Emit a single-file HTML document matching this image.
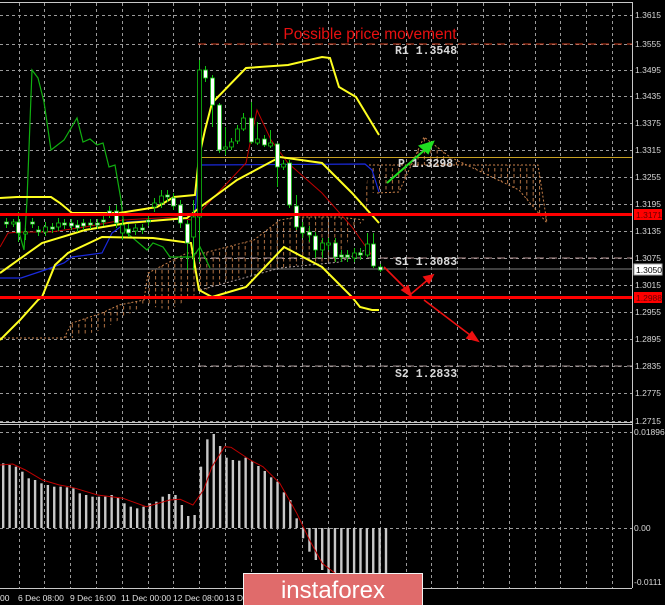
<!DOCTYPE html>
<html><head><meta charset="utf-8"><style>
html,body{margin:0;padding:0;background:#000;width:665px;height:605px;overflow:hidden}
svg{display:block}
text{font-family:"Liberation Sans",sans-serif}
text.mono{font-family:"Liberation Mono",monospace}
</style></head><body>
<svg id="s" width="665" height="605" viewBox="0 0 665 605" xmlns="http://www.w3.org/2000/svg">
<defs>
<pattern id="hatch" width="6.4" height="6" patternUnits="userSpaceOnUse">
<line x1="2" y1="0" x2="2" y2="3.5" stroke="#c8804a" stroke-width="1"/>
</pattern>
</defs>
<rect width="665" height="605" fill="#000"/>
<g id="grid" stroke="#9a9a9a" stroke-width="1" stroke-dasharray="3,3"></g>

<polygon points="0,338 64,338 72,323 102,313 119,305 144,300 148,273 187,253 204,253 254,240 280,220 297,217 339,217 365,220 365,197 369,165 538,165 547,223 519,190 450,157 424,137 399,192 377,193 369,193 365,220 352,230 340,262 300,265 280,268 255,272 200,292 170,310 144,305 102,330 72,338" fill="url(#hatch)" opacity="0.9"/>
<polyline points="0,338 64,338 72,323 102,313 119,305 144,300 148,273 187,253 204,253 254,240 280,220 297,217 339,217 365,220" fill="none" stroke="#c8804a" stroke-dasharray="2,2"/>
<polyline points="369,165 538,165 547,223" fill="none" stroke="#c8804a" stroke-dasharray="2,2"/>
<polyline points="377,193 399,192 424,137 450,157 519,190 547,223" fill="none" stroke="#c8804a" stroke-dasharray="2,2"/>
<polyline points="200,290 280,268 340,262 365,250" fill="none" stroke="#b0a0a0" stroke-dasharray="2,2"/>

<line x1="198" y1="44" x2="632" y2="44" stroke="#d04020" stroke-width="1" stroke-dasharray="8,5"/>
<line x1="198" y1="157.5" x2="632" y2="157.5" stroke="#c8a020" stroke-width="1"/>
<line x1="198" y1="258" x2="632" y2="258" stroke="#b09090" stroke-width="1" stroke-dasharray="8,5"/>
<line x1="198" y1="366" x2="632" y2="366" stroke="#a09090" stroke-width="1" stroke-dasharray="8,5"/>
<line x1="0" y1="269" x2="632" y2="269" stroke="#808080" stroke-width="1"/>

<polyline points="0,278 21,278 45,270 64,263 72,257 102,253 112,233 127,222 187,218 195,213 199,165 365,164 372,170 379,192" fill="none" stroke="#1a2adf" stroke-width="1.2"/>
<polyline points="0,247 8,233 20,232 51,232 85,227 123,220 178,217 191,220 199,213 246,163 257,110 271,140 288,163 322,193 352,227 373,257" fill="none" stroke="#c00000" stroke-width="1"/>
<polyline points="17,225 24,250 27,200 32,70 38,78 44,102 51,150 64,140 77,118 83,142 90,139 97,145 103,143 109,167 115,165 121,200 124,227 127,233 147,250 153,243 163,247 170,257 193,257 200,247 210,268" fill="none" stroke="#10b010" stroke-width="1.2"/>

<g fill="none" stroke="#ffff20" stroke-width="2">
<polyline points="0,198 17,197 51,197 60,203 72,213 119,213 157,207 174,197 195,195 199,157 205,130 212,103 246,68 288,65 322,57 330,58 339,87 356,97 379,135"/>
<polyline points="0,273 42,243 85,230 127,223 187,218 199,208 237,180 280,157 322,163 352,193 379,223"/>
<polyline points="0,340 20,320 38,300 42,297 55,265 68,253 102,237 153,238 191,243 199,290 212,297 246,287 284,247 322,267 352,297 360,307 372,310 379,310"/>
</g>

<g id="candles"></g>

<line x1="0" y1="214.5" x2="632" y2="214.5" stroke="#ff0000" stroke-width="3"/>
<line x1="0" y1="297.5" x2="632" y2="297.5" stroke="#ff0000" stroke-width="3"/>

<g stroke="#20e020" stroke-width="2" fill="#20e020">
<line x1="387" y1="183" x2="428" y2="147"/>
<polygon points="433,142 420,146 428,153"/>
</g>
<g stroke="#ee1010" stroke-width="1.6" fill="#ee1010">
<polyline points="384,267 411,294 430,278" fill="none"/>
<polygon points="433,275 424,277 429,283"/>
<polygon points="411,296 402,290 408,286"/>
<line x1="424" y1="300" x2="474" y2="338"/>
<polygon points="478,341 467,338 472,332"/>
</g>

<text x="370" y="39" fill="#e81010" font-size="15.5" text-anchor="middle">Possible price movement</text>
<g fill="#d8d8d8" font-size="11.5" font-weight="bold">
<text class="mono" x="395" y="54">R1 1.3548</text>
<text class="mono" x="398" y="167">P 1.3298</text>
<text class="mono" x="395" y="265">S1 1.3083</text>
<text class="mono" x="395" y="377">S2 1.2833</text>
</g>

<g id="hist"></g>
<polyline id="sig" fill="none" stroke="#c00000" stroke-width="1"/>

<g stroke="#c8c8c8" stroke-width="1" fill="none">
<line x1="0" y1="2.5" x2="632" y2="2.5"/>
<line x1="632.5" y1="2" x2="632.5" y2="588"/>
<line x1="0" y1="422.5" x2="632" y2="422.5"/>
<line x1="0" y1="424.5" x2="632" y2="424.5"/>
<line x1="0" y1="588.5" x2="632" y2="588.5"/>
</g>

<g fill="#d8d8d8" font-size="8.5">
<text x="635" y="18">1.3615</text>
<text x="635" y="47">1.3555</text>
<text x="635" y="73">1.3495</text>
<text x="635" y="99">1.3435</text>
<text x="635" y="126">1.3375</text>
<text x="635" y="153">1.3315</text>
<text x="635" y="180">1.3255</text>
<text x="635" y="207">1.3195</text>
<text x="635" y="234">1.3135</text>
<text x="635" y="261">1.3075</text>
<text x="635" y="288">1.3015</text>
<text x="635" y="315">1.2955</text>
<text x="635" y="342">1.2895</text>
<text x="635" y="369">1.2835</text>
<text x="635" y="396">1.2775</text>
<text x="635" y="424">1.2715</text>
<text x="634" y="435">0.01896</text>
<text x="634" y="531">0.00</text>
<text x="634" y="585">-0.0111</text>
</g>
<rect x="634" y="209" width="28" height="11" fill="#ff0000"/>
<text x="636" y="218" fill="#600" font-size="8.5">1.3171</text>
<rect x="634" y="292" width="28" height="11" fill="#ff0000"/>
<text x="636" y="301" fill="#600" font-size="8.5">1.2988</text>
<rect x="634" y="264" width="28" height="11" fill="#fff" stroke="#aaa"/>
<text x="636" y="273" fill="#000" font-size="8.5">1.3050</text>

<g fill="#e0e0e0" font-size="8.5">
<text x="0" y="601">00</text>
<text x="18" y="601">6 Dec 08:00</text>
<text x="70" y="601">9 Dec 16:00</text>
<text x="121" y="601">11 Dec 00:00</text>
<text x="173" y="601">12 Dec 08:00</text>
<text x="225" y="601">13 De</text>
</g>

<rect x="243.5" y="573.5" width="179" height="32" fill="#e06b6b" stroke="#f4f4f4" stroke-width="1"/>
<text x="333" y="598" fill="#ffffff" font-size="24" text-anchor="middle">instaforex</text>
</svg>
<script>
(function(){
var NS="http://www.w3.org/2000/svg";
function el(p,t,a){var e=document.createElementNS(NS,t);for(var k in a)e.setAttribute(k,a[k]);p.appendChild(e);return e;}
var g=document.getElementById("grid");
for(var i=0;i<24;i++){var x=Math.round(18.6+25.8*i)+0.5;el(g,"line",{x1:x,y1:3,x2:x,y2:422});el(g,"line",{x1:x,y1:425,x2:x,y2:588});}
var ys=[15,44,70,96,123,150,177,204,231,258,285,312,339,366,393,421];
ys.forEach(function(y){el(g,"line",{x1:0,y1:y+0.5,x2:632,y2:y+0.5});});
[432,528].forEach(function(y){el(g,"line",{x1:0,y1:y+0.5,x2:632,y2:y+0.5});});
var C=[
[6,222,224,218,228,1],[13,222,224,219,227,0],[18,222,233,212,242,1],[25,232,234,228,240,0],[32,222,224,218,228,1],
[38,230,232,226,236,1],[45,227,232,222,236,0],[52,227,229,223,233,1],[58,223,227,218,231,0],[64,223,225,219,229,1],
[71,223,226,219,230,1],[77,225,228,220,232,1],[83,223,226,219,230,1],[90,223,225,219,229,1],[97,223,225,219,229,1],
[103,220,222,215,226,1],[109,211,214,206,218,1],[116,211,223,205,228,1],[122,225,233,220,240,0],[128,229,233,224,237,1],
[135,228,231,224,235,0],[142,228,230,224,234,1],[148,220,222,215,226,1],[154,203,207,198,212,0],[161,196,203,190,208,0],
[167,195,197,190,202,1],[173,198,206,193,210,1],[180,205,223,200,228,1],[187,224,243,220,270,1],[193,217,237,200,270,0],
[199,70,217,60,262,0],[205,70,78,66,82,1],[212,78,105,75,127,1],[219,105,150,103,153,1],[225,147,149,127,155,0],
[231,142,147,138,150,0],[237,129,141,125,144,0],[243,118,129,113,131,0],[251,118,142,102,144,1],[257,139,143,122,145,0],
[264,139,145,135,147,1],[270,143,146,130,148,0],[277,144,167,144,187,1],[283,164,167,160,170,0],[289,163,205,160,208,1],
[296,206,227,195,230,1],[302,227,233,222,238,1],[309,232,235,226,242,1],[315,236,250,232,258,1],[322,243,250,238,258,0],
[328,243,245,238,250,0],[335,243,257,238,262,1],[341,255,257,250,262,1],[347,255,257,250,262,1],[354,253,258,248,262,0],
[360,253,255,248,260,1],[367,244,255,233,257,0],[373,244,266,233,268,1],[380,267,270,264,272,1]];
var cg=document.getElementById("candles");
C.forEach(function(c){
el(cg,"line",{x1:c[0]+0.5,y1:c[3],x2:c[0]+0.5,y2:c[4],stroke:"#10c010","stroke-width":1});
el(cg,"rect",{x:c[0]-1.5,y:c[1],width:4,height:Math.max(1.5,c[2]-c[1]),fill:c[5]?"#ffffff":"#000",stroke:"#10c010","stroke-width":0.8});
});
var tops=[490,495,500,515,535,540,550,555,560,560,562,565,580,585,590,590,590,585,592,610,620,625,620,610,605,590,582,585,615,648,645,500,418,402,438,473,480,482,473,485,498,513,532,545,577,600,655];
var neg=[715,755,780,810,830,840,850,860,860,860,860,860,860,860];
var hg=document.getElementById("hist");
var x0=2;
for(var i=0;i<tops.length;i++){var x=x0+i*6.38;var t=300+tops[i]/3;el(hg,"rect",{x:x,y:t,width:2.4,height:528-t,fill:"#c8c8c8"});}
for(var j=0;j<neg.length;j++){var x=x0+(tops.length+j)*6.38;var b=300+neg[j]/3;el(hg,"rect",{x:x,y:528,width:2.4,height:b-528,fill:"#c8c8c8"});}
var sp=[[0,495],[30,492],[60,510],[100,540],[140,555],[170,562],[230,585],[290,595],[345,620],[400,600],[425,598],[455,615],[480,570],[500,500],[530,440],[545,442],[590,480],[620,500],[660,550],[700,640],[730,720],[760,790],[790,820],[830,850]];
document.getElementById("sig").setAttribute("points",sp.map(function(p){return (p[0]*0.424).toFixed(1)+","+(300+p[1]/3).toFixed(1);}).join(" "));
})();
</script>
</body></html>
